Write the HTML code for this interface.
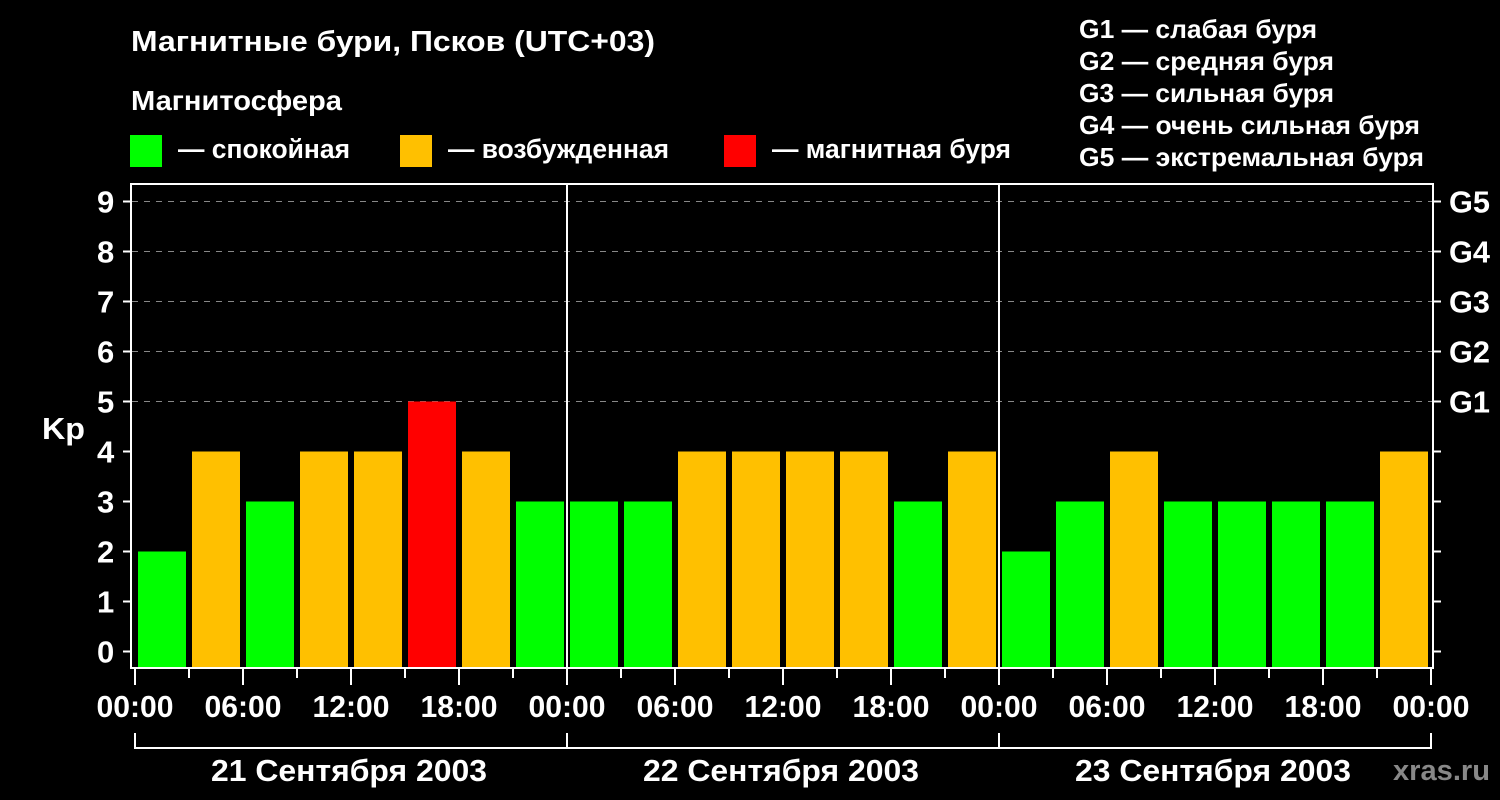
<!DOCTYPE html>
<html><head><meta charset="utf-8"><style>
html,body{margin:0;padding:0;background:#000;width:1500px;height:800px;overflow:hidden}
svg{display:block}
text{font-family:"Liberation Sans",sans-serif;font-weight:bold;fill:#fff}
</style></head><body>
<svg width="1500" height="800" viewBox="0 0 1500 800" xmlns="http://www.w3.org/2000/svg">
<rect width="1500" height="800" fill="#000"/>
<text x="131" y="51" font-size="29" textLength="524" lengthAdjust="spacingAndGlyphs">Магнитные бури, Псков (UTC+03)</text>
<text x="131" y="110" font-size="28" textLength="211" lengthAdjust="spacingAndGlyphs">Магнитосфера</text>
<rect x="130" y="135" width="32" height="32" fill="#00ff00"/>
<text x="178" y="158" font-size="27" textLength="172" lengthAdjust="spacingAndGlyphs">— спокойная</text>
<rect x="400" y="135" width="32" height="32" fill="#ffc000"/>
<text x="448" y="158" font-size="27" textLength="221" lengthAdjust="spacingAndGlyphs">— возбужденная</text>
<rect x="724" y="135" width="32" height="32" fill="#ff0000"/>
<text x="772" y="158" font-size="27" textLength="239" lengthAdjust="spacingAndGlyphs">— магнитная буря</text>
<g font-size="26">
<text x="1079" y="38" textLength="238" lengthAdjust="spacingAndGlyphs">G1 — слабая буря</text>
<text x="1079" y="70" textLength="255" lengthAdjust="spacingAndGlyphs">G2 — средняя буря</text>
<text x="1079" y="102" textLength="255" lengthAdjust="spacingAndGlyphs">G3 — сильная буря</text>
<text x="1079" y="134" textLength="341" lengthAdjust="spacingAndGlyphs">G4 — очень сильная буря</text>
<text x="1079" y="166" textLength="345" lengthAdjust="spacingAndGlyphs">G5 — экстремальная буря</text>
</g>
<g stroke="#888" stroke-width="1" stroke-dasharray="6,6">
<line x1="132" y1="201.5" x2="1432" y2="201.5"/>
<line x1="132" y1="251.5" x2="1432" y2="251.5"/>
<line x1="132" y1="301.5" x2="1432" y2="301.5"/>
<line x1="132" y1="351.5" x2="1432" y2="351.5"/>
<line x1="132" y1="401.5" x2="1432" y2="401.5"/>
</g>
<g id="bars"></g>
<g stroke="#fff" stroke-width="2" fill="none">
<rect x="131" y="184" width="1302" height="484"/>
<line x1="567" y1="184" x2="567" y2="668"/>
<line x1="999" y1="184" x2="999" y2="668"/>
<path d="M135 733V748H1431V733M567 733V748M999 733V748"/>
</g>
<g id="ticks" stroke="#fff" stroke-width="2"></g>
<g id="labels" font-size="31"></g>
<text x="42" y="439" font-size="31" textLength="43" lengthAdjust="spacingAndGlyphs">Kp</text>
<g font-size="31" text-anchor="middle">
<text x="349" y="781" textLength="276" lengthAdjust="spacingAndGlyphs">21 Сентября 2003</text>
<text x="781" y="781" textLength="276" lengthAdjust="spacingAndGlyphs">22 Сентября 2003</text>
<text x="1213" y="781" textLength="276" lengthAdjust="spacingAndGlyphs">23 Сентября 2003</text>
</g>
<text x="1393" y="780" font-size="29" style="fill:#888" textLength="97" lengthAdjust="spacingAndGlyphs">xras.ru</text>
</svg>
<script>
var ns="http://www.w3.org/2000/svg";
function el(p,t,a,txt){var e=document.createElementNS(ns,t);for(var k in a)e.setAttribute(k,a[k]);if(txt!=null)e.textContent=txt;document.getElementById(p).appendChild(e);}
var v=[2,4,3,4,4,5,4,3,3,3,4,4,4,4,3,4,2,3,4,3,3,3,3,4];
v.forEach(function(k,i){var x=135+i*54+3;var y=651.5-50*k;var c=k>=5?"#ff0000":k==4?"#ffc000":"#00ff00";el("bars","rect",{x:x,y:y,width:48,height:667-y,fill:c});});
for(var k=0;k<=9;k++){var y=651.5-50*k;el("ticks","line",{x1:123,y1:y,x2:131,y2:y});el("ticks","line",{x1:1433,y1:y,x2:1441,y2:y});el("labels","text",{x:97,y:y+11},String(k));}
var g=["G1","G2","G3","G4","G5"];for(var i=0;i<5;i++){el("labels","text",{x:1449,y:401.5-50*i+11,textLength:41,lengthAdjust:"spacingAndGlyphs"},g[i]);}
var hl=["00:00","06:00","12:00","18:00"];
for(var i=0;i<=24;i++){var x=135+i*54;var lg=i%2==0;el("ticks","line",{x1:x,y1:668,x2:x,y2:lg?685:678});if(lg){el("labels","text",{x:x,y:717,"text-anchor":"middle",textLength:77,lengthAdjust:"spacingAndGlyphs"},hl[(i/2)%4]);}}
</script>
</body></html>
